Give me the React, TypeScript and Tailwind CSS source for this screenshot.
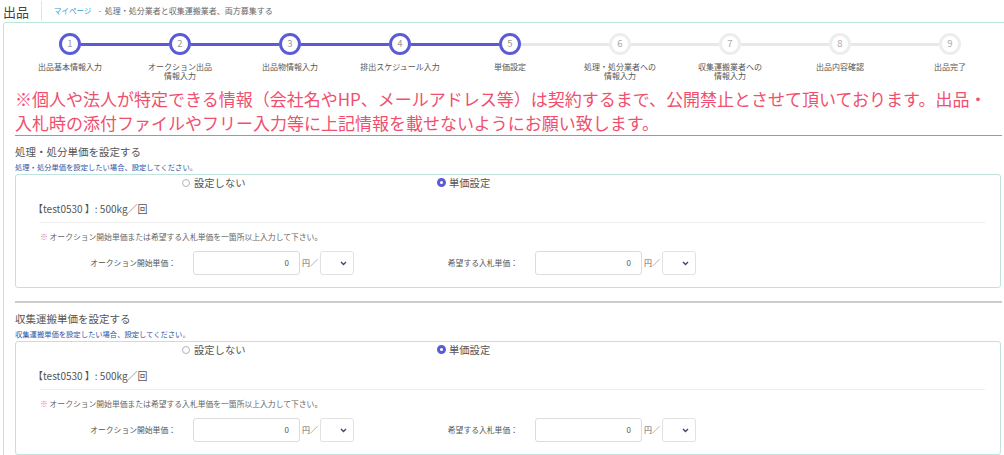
import React from "react";

const steps: string[][] = [
  ["出品基本情報入力"],
  ["オークション出品", "情報入力"],
  ["出品物情報入力"],
  ["排出スケジュール入力"],
  ["単価設定"],
  ["処理・処分業者への", "情報入力"],
  ["収集運搬業者への", "情報入力"],
  ["出品内容確認"],
  ["出品完了"],
];

function Step({ n, label }: { n: number; label: string[] }) {
  const active = n <= 5;
  const left =
    n === 1 ? "bg-transparent" : n <= 5 ? "bg-[#5b5bd6]" : "bg-[#e8e8e8]";
  const right =
    n === 9 ? "bg-transparent" : n < 5 ? "bg-[#5b5bd6]" : "bg-[#e8e8e8]";
  return (
    <div className="w-[110px] flex flex-col items-center">
      <div className="flex items-center w-full h-[22px]">
        <div className={`flex-1 h-[3px] ${left}`} />
        <div
          className={`w-[22px] h-[22px] rounded-full border-[3px] bg-white flex items-center justify-center text-[9.5px] leading-none ${
            active ? "border-[#5b5bd6] text-[#999]" : "border-[#ededed] text-[#aaa]"
          }`}
        >
          {n}
        </div>
        <div className={`flex-1 h-[3px] ${right}`} />
      </div>
      <div className="mt-[7px] text-[8px] leading-[9px] text-center text-[#555] whitespace-nowrap">
        {label.map((l, i) => (
          <div key={i}>{l}</div>
        ))}
      </div>
    </div>
  );
}

function Chevron() {
  return (
    <svg width="7" height="5" viewBox="0 0 7 5">
      <polyline points="1,1 3.5,3.5 6,1" fill="none" stroke="#3d4a66" strokeWidth="1.4" />
    </svg>
  );
}

function PriceGroup({ label, labelW }: { label: string; labelW: string }) {
  return (
    <div className="flex items-center h-[24px]">
      <div className={`${labelW} text-right text-[7.8px] text-[#555] whitespace-nowrap`}>{label}</div>
      <div className="ml-[17px] w-[107px] h-[24px] border border-[#dcdcdc] rounded-[3px] flex items-center justify-end pr-[10px] text-[8px] text-[#555]">
        0
      </div>
      <div className="ml-[2px] w-[16px] text-[8px] text-[#666]">円／</div>
      <div className="ml-[2px] w-[34px] h-[24px] border border-[#e2e2e2] rounded-[3px] flex items-center justify-end pr-[6px]">
        <Chevron />
      </div>
    </div>
  );
}

function Section({ title, sub, hrClass }: { title: string; sub: string; hrClass: string }) {
  return (
    <div>
      <div className={hrClass} />
      <div className="mt-[9px] h-[14px] leading-[14px] text-[10.5px] text-[#555]">{title}</div>
      <div className="mt-[4px] h-[8px] leading-[8px] text-[7.3px] text-[#2a55a8] whitespace-nowrap">{sub}</div>
      <div className="mt-[3px] w-[986px] border border-[#bfe2dc] rounded-[3px] pb-[12px]">
        <div className="flex items-center h-[15px] pl-[166px]">
          <div className="w-[255px] flex items-center">
            <span className="w-[8px] h-[8px] rounded-full border border-[#b5b5b5] bg-white" />
            <span className="ml-[4px] text-[10.3px] text-[#555]">設定しない</span>
          </div>
          <div className="flex items-center">
            <span className="w-[9px] h-[9px] rounded-full border-[3px] border-[#5b5bd6] bg-white" />
            <span className="ml-[3px] text-[10.3px] text-[#555]">単価設定</span>
          </div>
        </div>
        <div className="mt-[12px] h-[14px] leading-[14px] pl-[17px] text-[10px] text-[#555]">
          【test0530 】: 500kg／回
        </div>
        <div className="mt-[6px] ml-[24px] mr-[15px] h-[1px] bg-[#eeeeee]" />
        <div className="mt-[9px] ml-[24px] h-[10px] leading-[10px] text-[7.8px] text-[#666] whitespace-nowrap">
          <span className="text-[#f07a90]">※</span> オークション開始単価または希望する入札単価を一箇所以上入力して下さい。
        </div>
        <div className="mt-[9px] flex items-center">
          <PriceGroup label="オークション開始単価：" labelW="w-[160px]" />
          <PriceGroup label="希望する入札単価：" labelW="w-[164px]" />
        </div>
      </div>
    </div>
  );
}

export default function App() {
  return (
    <div className="w-[1004px] h-[455px] overflow-hidden bg-white font-['Noto_Sans_CJK_JP','Noto_Sans',sans-serif]">
      {/* header */}
      <div className="h-[22px] flex items-center">
        <div className="ml-[3px] text-[13px] text-[#444] leading-none">出品</div>
        <div className="ml-[12px] w-[1px] h-[20px] bg-[#e3e3e3]" />
        <div className="ml-[12px] text-[7.5px] text-[#2d9fd8] leading-none">マイページ</div>
        <div className="ml-[7px] text-[8px] text-[#666] leading-none whitespace-nowrap">
          -&nbsp; 処理・処分業者と収集運搬業者、両方募集する
        </div>
      </div>
      {/* main container */}
      <div className="ml-[3px] w-[1010px] border border-[#bde6da] rounded-[3px] pl-[11px] pt-[10px] pb-[10px]">
        <div className="h-[54px] flex">
          {steps.map((s, i) => (
            <Step key={i} n={i + 1} label={s} />
          ))}
        </div>
        <div className="w-[987px] text-[17px] leading-[24px] text-[#f04f6e] whitespace-nowrap">
          ※個人や法人が特定できる情報（会社名やHP、メールアドレス等）は契約するまで、公開禁止とさせて頂いております。出品・
          <br />
          入札時の添付ファイルやフリー入力等に上記情報を載せないようにお願い致します。
        </div>
        <div className="w-[987px]">
          <Section
            title="処理・処分単価を設定する"
            sub="処理・処分単価を設定したい場合、設定してください。"
            hrClass="h-[1px] bg-[#9a9a9a]"
          />
          <div className="mt-[13px]">
            <Section
              title="収集運搬単価を設定する"
              sub="収集運搬単価を設定したい場合、設定してください。"
              hrClass="h-[2px] bg-[#cccccc]"
            />
          </div>
        </div>
      </div>
    </div>
  );
}
